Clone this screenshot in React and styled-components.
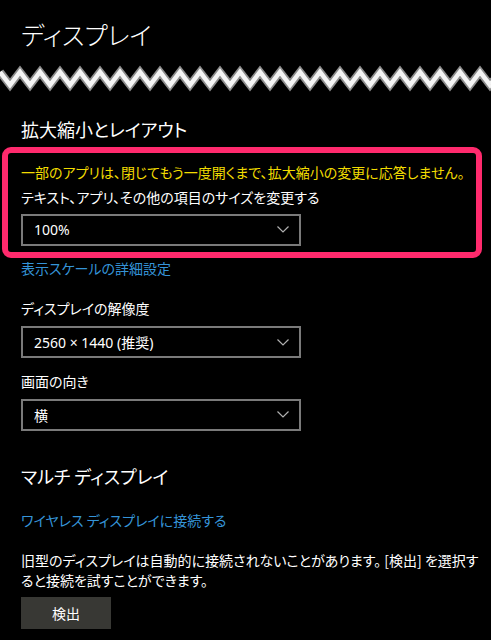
import React from 'react';
import styled, { createGlobalStyle } from 'styled-components';

const GlobalStyle = createGlobalStyle`
  html, body {
    margin: 0;
    padding: 0;
    background: #000;
  }
  body {
    font-family: "Noto Sans CJK JP", "Noto Sans", sans-serif;
    color: #fff;
    font-feature-settings: "palt";
  }
`;

const Page = styled.div`
  width: 491px;
  height: 640px;
  overflow: hidden;
  background: #000;
  padding-top: 16px;
  box-sizing: border-box;
`;

const Title = styled.h1`
  margin: 0 0 0 21px;
  font-size: 25px;
  line-height: 36px;
  font-weight: 300;
`;

const Zigzag = styled.svg`
  display: block;
  width: 491px;
  height: 32px;
  margin-top: 10px;
`;

const Section = styled.div`
  padding-left: 21px;
`;

const Heading = styled.h2`
  margin: ${p => p.$top || 0}px 0 0;
  font-size: 18px;
  line-height: 28px;
  font-weight: 400;
`;

const Highlight = styled.div`
  margin: 4.5px 0 0 2px;
  width: 480px;
  box-sizing: border-box;
  border: 6px solid #ff2a6d;
  border-radius: 9px;
  padding: 9px 0 6px 13px;
`;

const Notice = styled.div`
  color: #f2dc00;
  font-size: 14px;
  line-height: 20px;
`;

const Label = styled.div`
  font-size: 14px;
  line-height: 20px;
  margin-top: ${p => p.$top || 0}px;
`;

const Select = styled.div`
  display: flex;
  align-items: center;
  justify-content: space-between;
  width: 280px;
  height: 32px;
  box-sizing: border-box;
  border: 2px solid #7a7a7a;
  padding: 0 10px 0 11px;
  margin-top: ${p => p.$top || 0}px;
  font-size: 14px;
  font-family: "Noto Sans", "Noto Sans CJK JP", sans-serif;
`;

const Link = styled.a`
  display: block;
  color: #3594d8;
  font-size: 14px;
  line-height: 20px;
  text-decoration: none;
  margin-top: ${p => p.$top || 0}px;
`;

const Paragraph = styled.p`
  margin: 20px 0 0;
  width: 465px;
  font-size: 14px;
  line-height: 20px;
`;

const Button = styled.button`
  display: block;
  margin-top: 7px;
  width: 90px;
  height: 32px;
  border: none;
  background: #383834;
  color: #fff;
  font-family: inherit;
  font-size: 14px;
`;

const Chevron = () => (
  <svg width="12" height="7" viewBox="0 0 12 7">
    <polyline points="0.5,0.5 6,6 11.5,0.5" fill="none" stroke="#b0b0b0" strokeWidth="1.2" />
  </svg>
);

const Dropdown = ({ value, top }) => (
  <Select $top={top}>
    <span>{value}</span>
    <Chevron />
  </Select>
);

const zigPoints = Array.from({ length: 52 }, (_, i) => `${i * 10},${i % 2 === 0 ? 10 : 23}`).join(' ');

export default function App() {
  return (
    <>
      <GlobalStyle />
      <Page>
        <Title>ディスプレイ</Title>
        <Zigzag viewBox="0 0 491 32">
          <polyline points={zigPoints} fill="none" stroke="#8c8c8c" strokeWidth="8" strokeLinejoin="miter" />
          <polyline points={zigPoints} fill="none" stroke="#f4f4f4" strokeWidth="4.5" strokeLinejoin="miter" />
        </Zigzag>
        <Section>
          <Heading $top={20.5}>拡大縮小とレイアウト</Heading>
        </Section>
        <Highlight>
          <Notice>一部のアプリは、閉じてもう一度開くまで、拡大縮小の変更に応答しません。</Notice>
          <Label $top={5}>テキスト、アプリ、その他の項目のサイズを変更する</Label>
          <Dropdown value="100%" top={6.5} />
        </Highlight>
        <Section>
          <Link href="#" $top={0.5}>表示スケールの詳細設定</Link>
          <Label $top={19.5}>ディスプレイの解像度</Label>
          <Dropdown value="2560 × 1440 (推奨)" top={8.5} />
          <Label $top={13}>画面の向き</Label>
          <Dropdown value="横" top={7.5} />
          <Heading $top={31}>マルチ ディスプレイ</Heading>
          <Link href="#" $top={20}>ワイヤレス ディスプレイに接続する</Link>
          <Paragraph>
            旧型のディスプレイは自動的に接続されないことがあります。 [検出] を選択す<br />
            ると接続を試すことができます。
          </Paragraph>
          <Button>検出</Button>
        </Section>
      </Page>
    </>
  );
}
